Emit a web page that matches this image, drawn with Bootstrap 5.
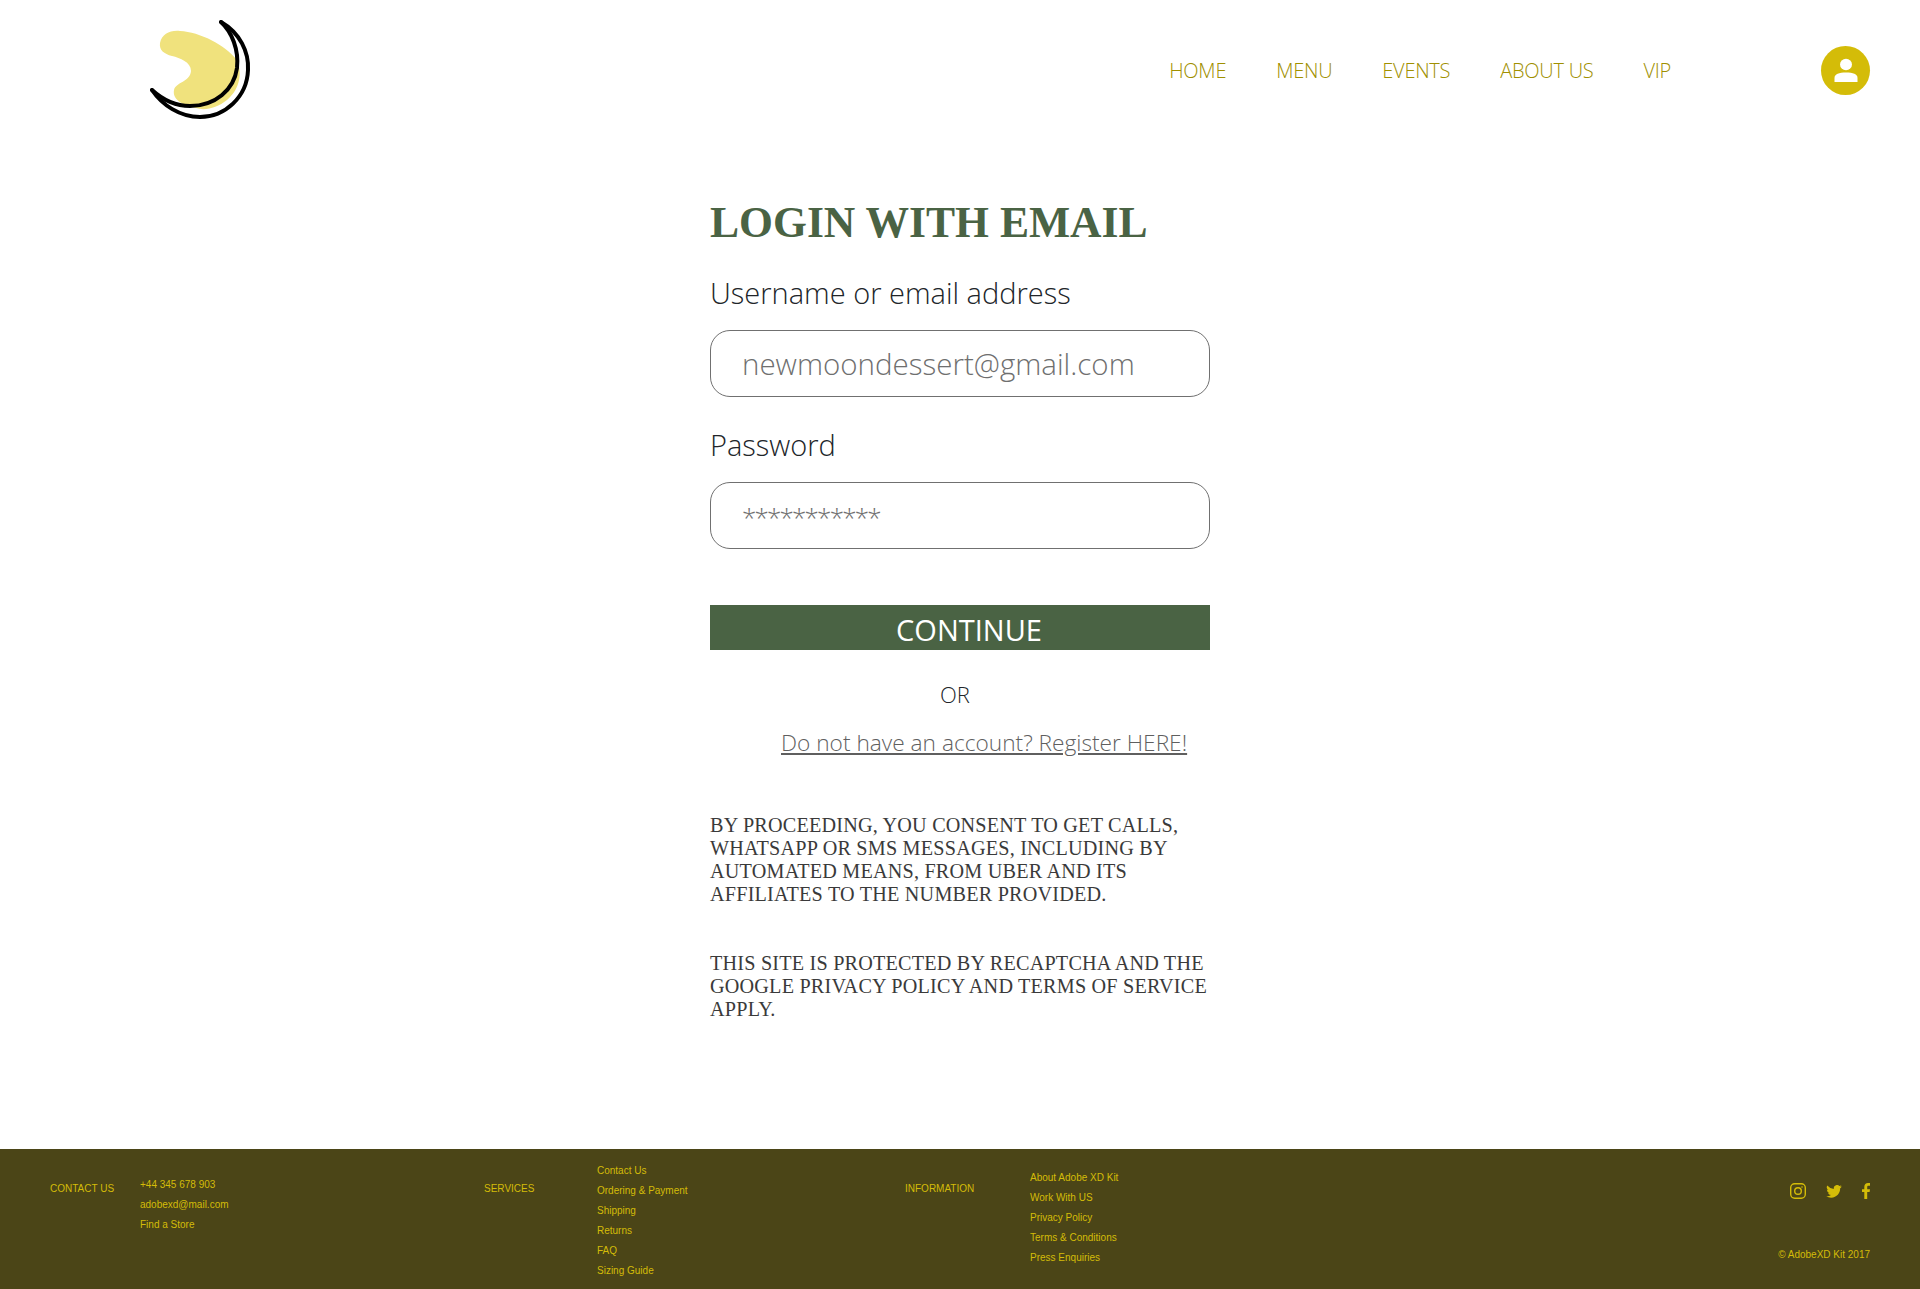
<!DOCTYPE html>
<html lang="en">
<head>
  <meta charset="UTF-8" />
  <meta name="viewport" content="width=device-width, initial-scale=1.0" />
  <title>New Moon Dessert - Login</title>
  <link href="https://cdn.jsdelivr.net/npm/bootstrap@5.3.0/dist/css/bootstrap.min.css" rel="stylesheet" />
  <style>
    body {
      font-family: "Open Sans", sans-serif;
      background-color: #fff;
      min-height: 1289px;
      display: flex;
      flex-direction: column;
    }

    /* Header */
    .top-bar {
      height: 140px;
      padding: 0 50px 0 148px;
      align-items: center;
    }

    .brand-mark {
      padding: 0;
      line-height: 0;
    }

    .main-links {
      margin-left: auto;
      margin-right: 150px;
      margin-top: 2px;
      gap: 50px;
    }

    .main-links .nav-link {
      padding: 0;
      font-size: 20px;
      font-weight: 300;
      letter-spacing: -0.25px;
      color: #a09000;
    }

    .avatar-dot {
      width: 49px;
      height: 49px;
      border-radius: 50%;
      background-color: #d4bc08;
    }

    /* Login form */
    .login-box {
      width: 500px;
      padding-top: 57px;
      flex-grow: 1;
    }

    .login-title {
      font-family: "Liberation Serif", serif;
      font-weight: 700;
      font-size: 43.6px;
      line-height: 50px;
      color: #4a6344;
      margin-bottom: 26px;
    }

    .field-label {
      font-size: 29px;
      font-weight: 300;
      line-height: 40px;
      color: #212529;
      margin-bottom: 17px;
    }

    .field-input {
      height: 67px;
      border: 1px solid #707070;
      border-radius: 20px;
      padding: 0 31px;
      font-size: 29.5px;
      font-weight: 300;
      margin-bottom: 28px;
    }

    .field-input::placeholder {
      color: #6f6f6f;
    }

    .pass-input::placeholder {
      font-size: 26px;
      letter-spacing: -1.8px;
    }

    .continue-btn {
      width: 100%;
      height: 45px;
      background-color: #4a6344;
      color: #fff;
      border: 0;
      border-radius: 0;
      padding: 2px 0 0 18px;
      margin-top: 28px;
      font-size: 29px;
      line-height: 45px;
      font-weight: 400;
    }

    .or-text {
      font-size: 22px;
      font-weight: 300;
      color: #212529;
      line-height: 30px;
      padding-right: 10px;
      margin-top: 29px;
    }

    .register-link {
      display: block;
      font-size: 22.7px;
      font-weight: 300;
      line-height: 34px;
      color: #5f5f5f;
      margin: 17px 0 54px 71px;
      white-space: nowrap;
    }

    .legal-text {
      font-family: "Liberation Serif", serif;
      font-size: 20.2px;
      line-height: 23px;
      letter-spacing: 0.2px;
      color: #3a3a3a;
      margin-bottom: 46px;
    }

    /* Footer */
    .site-foot {
      height: 140px;
      background-color: #4b4517;
      color: #d4bc08;
      font-family: "Liberation Sans", sans-serif;
      font-size: 10px;
      line-height: 20px;
      display: grid;
      grid-template-columns: 90px 344px 113px 308px 125px auto 1fr;
      padding: 12px 50px 0;
    }

    .foot-label {
      padding-top: 18px;
    }

    .foot-list {
      list-style: none;
      margin: 0;
      padding: 0;
    }

    .foot-list a {
      color: inherit;
      text-decoration: none;
    }

    .contact-list {
      padding-top: 14px;
    }

    .info-list {
      padding-top: 7px;
    }

    .foot-right {
      text-align: right;
    }

    .social-row {
      padding-top: 22px;
      gap: 20px;
      margin-bottom: 46px;
    }

    .social-row a {
      color: #d4bc08;
      line-height: 0;
    }
  </style>
</head>

<body>
  <!-- Navbar -->
  <nav class="top-bar d-flex">
    <a class="brand-mark" href="#" aria-label="Home">
      <svg width="104" height="104" viewBox="48 18 104 104">
        <path fill="#f0e27d" d="M60 43C62 34 70 30 80 31C100 32 125 45 137 60C142 72 141 88 127 100C117 108 105 111 96 108C84 106 72 100 74 90C76 82 90 82 91 71C91 62 80 58 72 56C64 54 59 50 60 43Z" />
        <path fill="none" stroke="#000" stroke-width="4" stroke-linecap="round" d="M121 22C140 33 149 52 148 70C147 97 125 117 100 117C80 117 62 105 52 90" />
        <path fill="none" stroke="#000" stroke-width="4" stroke-linecap="round" d="M121 22C132 32 139 50 137 68C134 90 115 106 90 106C76 106 63 100 52 90" />
      </svg>
    </a>
    <ul class="nav main-links">
      <li class="nav-item"><a class="nav-link" href="#">HOME</a></li>
      <li class="nav-item"><a class="nav-link" href="#">MENU</a></li>
      <li class="nav-item"><a class="nav-link" href="#">EVENTS</a></li>
      <li class="nav-item"><a class="nav-link" href="#">ABOUT US</a></li>
      <li class="nav-item"><a class="nav-link" href="#">VIP</a></li>
    </ul>
    <a class="avatar-dot d-flex align-items-center justify-content-center" href="#" aria-label="Account">
      <svg width="24" height="24" viewBox="0 0 24 24">
        <ellipse cx="12" cy="6.5" rx="6" ry="5.7" fill="#fff" />
        <path fill="#fff" d="M0.5 24V20C0.5 16 5 14.5 12 14.5S23.5 16 23.5 20V24Z" />
      </svg>
    </a>
  </nav>

  <!-- Login form -->
  <main class="login-box mx-auto">
    <h1 class="login-title">LOGIN WITH EMAIL</h1>
    <form>
      <label class="field-label form-label d-block" for="userEmail">Username or email address</label>
      <input class="form-control field-input" id="userEmail" type="text" placeholder="newmoondessert@gmail.com" />
      <label class="field-label form-label d-block" for="userPass">Password</label>
      <input class="form-control field-input pass-input" id="userPass" type="text" placeholder="***********" />
      <button class="btn continue-btn" type="button">CONTINUE</button>
    </form>
    <div class="or-text text-center">OR</div>
    <a class="register-link" href="#">Do not have an account? Register HERE!</a>
    <p class="legal-text">BY PROCEEDING, YOU CONSENT TO GET CALLS, WHATSAPP OR SMS MESSAGES, INCLUDING BY AUTOMATED MEANS, FROM UBER AND ITS AFFILIATES TO THE NUMBER PROVIDED.</p>
    <p class="legal-text">THIS SITE IS PROTECTED BY RECAPTCHA AND THE GOOGLE PRIVACY POLICY AND TERMS OF SERVICE APPLY.</p>
  </main>

  <!-- Footer -->
  <footer class="site-foot">
    <div class="foot-label">CONTACT US</div>
    <ul class="foot-list contact-list">
      <li>+44 345 678 903</li>
      <li><a href="#">adobexd@mail.com</a></li>
      <li><a href="#">Find a Store</a></li>
    </ul>
    <div class="foot-label">SERVICES</div>
    <ul class="foot-list">
      <li><a href="#">Contact Us</a></li>
      <li><a href="#">Ordering &amp; Payment</a></li>
      <li><a href="#">Shipping</a></li>
      <li><a href="#">Returns</a></li>
      <li><a href="#">FAQ</a></li>
      <li><a href="#">Sizing Guide</a></li>
    </ul>
    <div class="foot-label">INFORMATION</div>
    <ul class="foot-list info-list">
      <li><a href="#">About Adobe XD Kit</a></li>
      <li><a href="#">Work With US</a></li>
      <li><a href="#">Privacy Policy</a></li>
      <li><a href="#">Terms &amp; Conditions</a></li>
      <li><a href="#">Press Enquiries</a></li>
    </ul>
    <div class="foot-right">
      <div class="social-row d-flex justify-content-end align-items-center">
        <a href="#" aria-label="Instagram">
          <svg width="16" height="16" viewBox="0 0 16 16" fill="none" stroke="currentColor" stroke-width="1.4">
            <rect x="0.7" y="0.7" width="14.6" height="14.6" rx="4" />
            <circle cx="8" cy="8" r="3.3" />
            <circle cx="12" cy="4" r="0.8" fill="currentColor" stroke="none" />
          </svg>
        </a>
        <a href="#" aria-label="Twitter">
          <svg width="16" height="13" viewBox="0 0 24 20" fill="currentColor">
            <path d="M24 2.4a9.8 9.8 0 0 1-2.8.8A4.9 4.9 0 0 0 23.3.5a9.8 9.8 0 0 1-3.1 1.2 4.9 4.9 0 0 0-8.4 4.5A13.9 13.9 0 0 1 1.7.9a4.9 4.9 0 0 0 1.5 6.6 4.9 4.9 0 0 1-2.2-.6v.1a4.9 4.9 0 0 0 3.9 4.8 4.9 4.9 0 0 1-2.2.1 4.9 4.9 0 0 0 4.6 3.4A9.9 9.9 0 0 1 0 17.3 13.9 13.9 0 0 0 7.5 19.5c9.1 0 14-7.5 14-14v-.6A10 10 0 0 0 24 2.4Z" />
          </svg>
        </a>
        <a href="#" aria-label="Facebook">
          <svg width="8" height="16" viewBox="0 0 8 16" fill="currentColor">
            <path d="M2.3 16V9H0V6.2h2.3V4.1C2.3 1.4 3.8 0 6 0c1 0 1.7.1 2 .1v2.6H6.6C5.4 2.7 5.2 3.3 5.2 4.1v2.1H8L7.6 9H5.2v7Z" />
          </svg>
        </a>
      </div>
      <div>&copy; AdobeXD Kit 2017</div>
    </div>
  </footer>
  <script src="https://cdn.jsdelivr.net/npm/bootstrap@5.3.0/dist/js/bootstrap.bundle.min.js"></script>
</body>
</html>
